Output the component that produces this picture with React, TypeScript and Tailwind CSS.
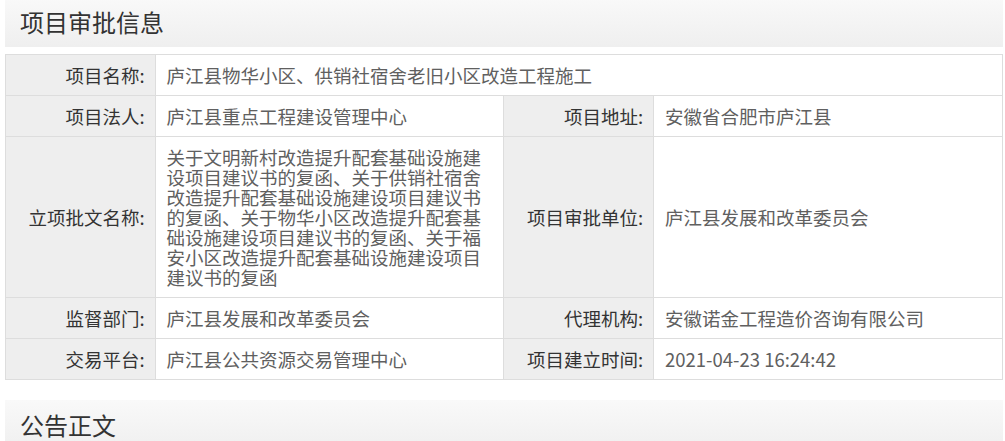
import React from "react";

const font = { fontFamily: '"Noto Sans CJK SC", "Noto Sans", sans-serif' };

function Header({ title }: { title: string }) {
  return (
    <div className="h-[50px] flex items-center pl-[15px] bg-gradient-to-b from-[#f9f9f9] to-[#efefef] text-[24px] text-[#333]">
      {title}
    </div>
  );
}

function Label({ children }: { children: React.ReactNode }) {
  return (
    <td className="border border-[#dddddd] bg-[#eeeeee] text-right pr-[10px] pl-[8px] py-[10px] text-[#333] align-middle">
      {children}
    </td>
  );
}

function Value({ children, colSpan }: { children: React.ReactNode; colSpan?: number }) {
  return (
    <td colSpan={colSpan} className="border border-[#dddddd] bg-white text-left pl-[11px] pr-[10px] py-[10px] text-[#606060] align-middle">
      {children}
    </td>
  );
}

export default function App() {
  return (
    <div className="bg-white min-h-[441px] overflow-hidden" style={font}>
      <div className="ml-[5px] w-[998px]">
        <div className="-mt-[3px]">
          <Header title="项目审批信息" />
        </div>
        <table className="mt-[7px] w-[998px] border-collapse table-fixed text-[18.5px] leading-[20px]">
          <colgroup>
            <col className="w-[15%]" />
            <col className="w-[35%]" />
            <col className="w-[15%]" />
            <col className="w-[35%]" />
          </colgroup>
          <tbody>
            <tr>
              <Label>项目名称:</Label>
              <Value colSpan={3}>庐江县物华小区、供销社宿舍老旧小区改造工程施工</Value>
            </tr>
            <tr>
              <Label>项目法人:</Label>
              <Value>庐江县重点工程建设管理中心</Value>
              <Label>项目地址:</Label>
              <Value>安徽省合肥市庐江县</Value>
            </tr>
            <tr>
              <Label>立项批文名称:</Label>
              <Value>
                关于文明新村改造提升配套基础设施建设项目建议书的复函、关于供销社宿舍改造提升配套基础设施建设项目建议书的复函、关于物华小区改造提升配套基础设施建设项目建议书的复函、关于福安小区改造提升配套基础设施建设项目建议书的复函
              </Value>
              <Label>项目审批单位:</Label>
              <Value>庐江县发展和改革委员会</Value>
            </tr>
            <tr>
              <Label>监督部门:</Label>
              <Value>庐江县发展和改革委员会</Value>
              <Label>代理机构:</Label>
              <Value>安徽诺金工程造价咨询有限公司</Value>
            </tr>
            <tr>
              <Label>交易平台:</Label>
              <Value>庐江县公共资源交易管理中心</Value>
              <Label>项目建立时间:</Label>
              <Value>2021-04-23 16:24:42</Value>
            </tr>
          </tbody>
        </table>
        <div className="mt-[20px]">
          <Header title="公告正文" />
        </div>
      </div>
    </div>
  );
}
